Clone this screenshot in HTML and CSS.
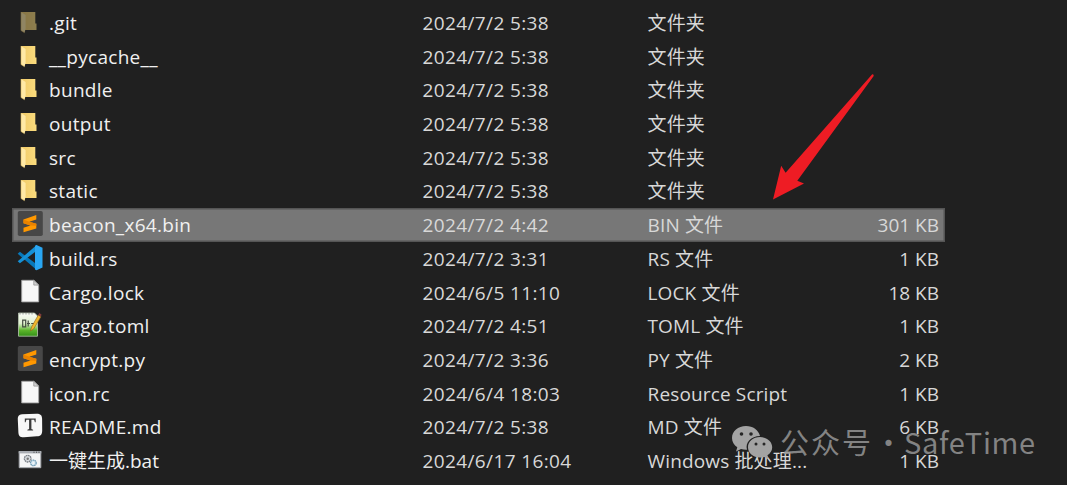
FILE: index.html
```html
<!DOCTYPE html>
<html lang="zh-CN">
<head>
<meta charset="utf-8">
<title>文件</title>
<link rel="stylesheet" href="styles.css">
</head>
<body>
<svg class="defs" aria-hidden="true">
  <defs>
    <linearGradient id="fold" x1="0" x2="1"><stop offset="0" stop-color="#f0ca68"/><stop offset="1" stop-color="#fbdc7e"/></linearGradient>
    <linearGradient id="green" x1="0" x2="0" y1="0" y2="1"><stop offset="0" stop-color="#fafcf8"/><stop offset=".45" stop-color="#dff0cf"/><stop offset=".75" stop-color="#5cb52c"/><stop offset="1" stop-color="#348f18"/></linearGradient>
    <symbol id="folder" viewBox="0 0 28 28"><path d="M5 3h14.3v11.500h1.200v6.500H9z" fill="url(#fold)"/><path d="M5 3l4.600 3v13.400l-1 4.400L5 21.500z" fill="#ffe9a6"/><path d="M5 3v18.500l3.500 2.200" fill="none" stroke="#d9b65c" stroke-width=".6"/></symbol>
    <symbol id="sublime" viewBox="0 0 28 28"><rect x="1.800" y="1" width="25" height="25" rx="1.800" fill="#474747"/><path d="M7.500 9.400L20.300 5v4.500l-7 2.200 7 2.100v4.600L7.500 22.200v-4.500l7-2.300-7-2.200z" fill="#ff9800"/><path d="M7.500 9.400l5.800 2.300 7 2.100v2l-5.800-.4-7-2.200z" fill="#e98200"/></symbol>
    <symbol id="code" viewBox="0 0 28 28"><path d="M1.700 9.800l2.200-2L21 20.500v5.800z" fill="#0878b9"/><path d="M1.700 17.300l2.200 2L21 6.600V.8z" fill="#1690d5"/><path d="M20.500 1l6 2.700v19.700l-6 2.800-1.500-.8 0-4V6.500l0-4.800z" fill="#29a6f2"/></symbol>
    <symbol id="page" viewBox="0 0 28 28"><path d="M5.700 2.300h12.100l4.900 4.800v16.800h-17z" fill="#f7f7f7" stroke="#a2a2a2" stroke-width=".9"/><path d="M17.800 2.300v4.800h4.900z" fill="#d2d2d2" stroke="#929292" stroke-width=".8"/></symbol>
    <symbol id="npp" viewBox="0 0 28 28"><path d="M2.500 2h16l3 3v20.200h-19z" fill="url(#green)" stroke="#b8c5b0" stroke-width=".8"/><path d="M4 2v1.600m3-1.600v1.600m3-1.600v1.600m3-1.600v1.600m3-1.600v1.600" stroke="#888" stroke-width=".8"/><path d="M6.700 8.500v8M6.700 9.200h3v6.600H6.700M12.200 9.500v6m-1.200-3h3m1.200 0h3" fill="none" stroke="#434c41" stroke-width="1.200"/><path d="M14.500 20l1-4L22.300 4l2.600 1.700-7.200 12.200z" fill="#f0b62d" stroke="#86611b" stroke-width=".6"/><path d="M22.300 4l1-2 2.200 1.500-.6 2.200z" fill="#803b3b"/></symbol>
    <symbol id="typora" viewBox="0 0 28 28"><path d="M6 2.200l14.500-.5c4 0 5.500 1.400 5.600 5l.1 12c-.2 4-1.500 5.400-5.300 5.600L8 25.300c-4 .1-5.300-1-5.600-4.800L1.800 7.500c0-3.500 1-5 4.200-5.300z" fill="#f8f8f8"/><path d="M8.800 6.500h10.900v3.700h-.8l-.8-2.500h-2.700v9.400l1.700.6v.8h-5.700v-.8l1.700-.6V7.700h-2.700l-.8 2.500h-.8z" fill="#3b3b3b"/></symbol>
    <symbol id="batch" viewBox="0 0 28 28"><path d="M3.200 5.500h21.600v16.200H3.200z" fill="#f4f5f6" stroke="#a6a9ae"/><path d="M2.700 5h22.600v2.400H2.700z" fill="#a9adb3"/><path d="M17.500 6.200h1m1.500 0h1m1.500 0h1" stroke="#444"/><circle cx="11.700" cy="12.700" r="3.300" fill="#d9dde1" stroke="#7b8188" stroke-width="1.300" stroke-dasharray="1.700 .5"/><circle cx="11.700" cy="12.700" r="1.200" fill="#777"/><circle cx="17.400" cy="16.900" r="2.800" fill="#d7e9f3" stroke="#6c9ab4" stroke-width="1.200" stroke-dasharray="1.500 .5"/><circle cx="17.400" cy="16.900" r="1" fill="#f4f5f6"/></symbol>
  </defs>
</svg>
<main class="files">
  <div class="row"><svg class="icon folder hidden-item"><use href="#folder"/></svg><span class="name">.git</span><span class="date">2024/7/2 5:38</span><span class="type">文件夹</span><span class="size"></span></div>
  <div class="row"><svg class="icon folder"><use href="#folder"/></svg><span class="name">__pycache__</span><span class="date">2024/7/2 5:38</span><span class="type">文件夹</span><span class="size"></span></div>
  <div class="row"><svg class="icon folder"><use href="#folder"/></svg><span class="name">bundle</span><span class="date">2024/7/2 5:38</span><span class="type">文件夹</span><span class="size"></span></div>
  <div class="row"><svg class="icon folder"><use href="#folder"/></svg><span class="name">output</span><span class="date">2024/7/2 5:38</span><span class="type">文件夹</span><span class="size"></span></div>
  <div class="row"><svg class="icon folder"><use href="#folder"/></svg><span class="name">src</span><span class="date">2024/7/2 5:38</span><span class="type">文件夹</span><span class="size"></span></div>
  <div class="row"><svg class="icon folder"><use href="#folder"/></svg><span class="name">static</span><span class="date">2024/7/2 5:38</span><span class="type">文件夹</span><span class="size"></span></div>
  <div class="row selected"><svg class="icon"><use href="#sublime"/></svg><span class="name">beacon_x64.bin</span><span class="date">2024/7/2 4:42</span><span class="type">BIN 文件</span><span class="size">301 KB</span></div>
  <div class="row"><svg class="icon"><use href="#code"/></svg><span class="name">build.rs</span><span class="date">2024/7/2 3:31</span><span class="type">RS 文件</span><span class="size">1 KB</span></div>
  <div class="row"><svg class="icon"><use href="#page"/></svg><span class="name">Cargo.lock</span><span class="date">2024/6/5 11:10</span><span class="type">LOCK 文件</span><span class="size">18 KB</span></div>
  <div class="row"><svg class="icon"><use href="#npp"/></svg><span class="name">Cargo.toml</span><span class="date">2024/7/2 4:51</span><span class="type">TOML 文件</span><span class="size">1 KB</span></div>
  <div class="row"><svg class="icon"><use href="#sublime"/></svg><span class="name">encrypt.py</span><span class="date">2024/7/2 3:36</span><span class="type">PY 文件</span><span class="size">2 KB</span></div>
  <div class="row"><svg class="icon"><use href="#page"/></svg><span class="name">icon.rc</span><span class="date">2024/6/4 18:03</span><span class="type">Resource Script</span><span class="size">1 KB</span></div>
  <div class="row"><svg class="icon"><use href="#typora"/></svg><span class="name">README.md</span><span class="date">2024/7/2 5:38</span><span class="type">MD 文件</span><span class="size">6 KB</span></div>
  <div class="row"><svg class="icon"><use href="#batch"/></svg><span class="name cjk-name">一键生成.bat</span><span class="date">2024/6/17 16:04</span><span class="type">Windows 批处理...</span><span class="size">1 KB</span></div>
</main>
<svg class="arrow" viewBox="0 0 110 132"><path d="M102 4.500Q103.800 3.700 103.700 6L27.300 110.800 34 113.500 3 129.400 11.200 95.700 15.600 102.800z" fill="#ee1c24"/></svg>
<div class="watermark">
  <svg class="wechat" viewBox="0 0 42 34"><path d="M15 1C7 1 1 6.200 1 13c0 4 2 7.200 5.300 9.300L5 26.500l5-2.400c2 .6 4 .8 6 .7C14 17.500 20 11 29 11 27.500 5 22 1 15 1z" fill="#a3a3a3"/><path d="M29 12c-7 0-12 4.500-12 10.200S22 32.500 29 32.500c1.500 0 3-.2 4.300-.6l4.200 2-1.100-3.700c3-1.900 4.800-4.700 4.800-8C41.200 16.500 36 12 29 12z" fill="#a3a3a3"/><g fill="#262626"><circle cx="10.500" cy="9" r="1.800"/><circle cx="20" cy="9" r="1.800"/><circle cx="25" cy="19" r="1.500"/><circle cx="33" cy="19" r="1.500"/></g></svg>
  <span class="account">公众号</span><span class="dot">·</span><span class="brand">SafeTime</span>
</div>
</body>
</html>
```
FILE: styles.css
```css
* { box-sizing: border-box; }
body {
  margin: 0;
  width: 1067px;
  height: 485px;
  overflow: hidden;
  position: relative;
  background: #202020;
  color: #d8d8d8;
  font: 19px/35px "Open Sans", "Noto Sans CJK SC", sans-serif;
}
.defs { position: absolute; width: 0; height: 0; }
.files { width: 933px; margin-left: 12px; padding-top: 6px; }
.row {
  display: grid;
  grid-template-columns: 37px 373.500px 225px 180.500px 111px;
  height: 33.700px;
  white-space: nowrap;
}
.row.selected { background: #777; box-shadow: inset 0 0 0 1.500px #555; }
.icon { width: 28px; height: 28px; margin: 2px 0 0 4px; }
.icon.folder { margin-top: 3px; }
.hidden-item { opacity: .5; }
.name { color: #f0f0f0; letter-spacing: .3px; }
.cjk-name { letter-spacing: 0; }
.date { letter-spacing: .38px; }
.type { letter-spacing: .15px; }
.size { text-align: right; }
.arrow { position: absolute; left: 770px; top: 70px; width: 110px; height: 132px; }
.watermark {
  position: absolute;
  left: 731px;
  top: 424px;
  display: flex;
  color: rgba(150, 150, 150, .85);
  font: 400 29px/34px "Noto Sans CJK SC", sans-serif;
}
.wechat { width: 42px; height: 34px; margin-top: 1px; }
.account { margin-left: 7px; letter-spacing: 2px; }
.dot { width: 31px; text-align: center; }
.brand { letter-spacing: .7px; }
```
